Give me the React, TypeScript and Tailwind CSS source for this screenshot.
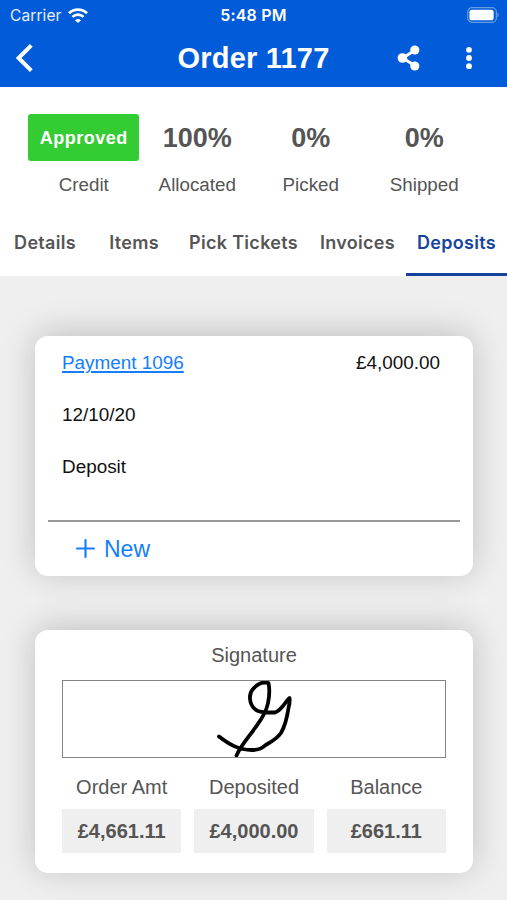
import { FiPlus } from 'react-icons/fi';

interface Stat {
  label: string;
  value: string;
  badge?: boolean;
}

const stats: Stat[] = [
  { label: 'Credit', value: 'Approved', badge: true },
  { label: 'Allocated', value: '100%' },
  { label: 'Picked', value: '0%' },
  { label: 'Shipped', value: '0%' },
];

const tabs = [
  { name: 'Details', width: 'w-[90px]' },
  { name: 'Items', width: 'w-[88px]' },
  { name: 'Pick Tickets', width: 'w-[131px]' },
  { name: 'Invoices', width: 'w-[97px]' },
  { name: 'Deposits', width: 'w-[101px]' },
];

const totals = [
  { label: 'Order Amt', value: '£4,661.11' },
  { label: 'Deposited', value: '£4,000.00' },
  { label: 'Balance', value: '£661.11' },
];

function StatusBar() {
  return (
    <div className="grid h-[30px] grid-cols-3 items-center pl-[10px] pr-2 font-['Inter',sans-serif] text-white">
      <div className="flex items-center gap-[6px] text-[15.5px] leading-5 tracking-[0.1px]">
        <span className="pt-px text-white/90">Carrier</span>
        <svg className="h-[15px] w-5" viewBox="0 0 20 15" fill="none" stroke="white">
          <path d="M1 5.2C6 .4 14 .4 19 5.2" strokeWidth="2.8" />
          <path d="M4.4 8.9c3.2-3 8-3 11.2 0" strokeWidth="2.6" />
          <path d="M7 12.2c1.7-1.6 4.3-1.6 6 0L10 15z" fill="white" stroke="none" />
        </svg>
      </div>
      <span className="pr-[2px] text-center text-base font-semibold leading-5 tracking-[0.2px]">5:48 PM</span>
      <svg className="h-4 w-8 justify-self-end" viewBox="0 0 33 16" preserveAspectRatio="none">
        <rect x="0.7" y="0.7" width="29.6" height="14.6" rx="4.5" fill="none" stroke="white" strokeOpacity="0.4" strokeWidth="1.2" />
        <rect x="2.5" y="2.7" width="25" height="10.6" rx="2.6" fill="white" />
        <path d="M31.4 5.6v4.8c1.6-.8 1.6-4 0-4.8z" fill="white" fillOpacity="0.45" />
      </svg>
    </div>
  );
}

function Header() {
  return (
    <header className="h-[87px] bg-[#025bd8]">
      <StatusBar />
      <div className="grid h-[55px] grid-cols-[1fr_auto_1fr] items-center pl-[15px] pr-[15px] text-white">
        <button className="justify-self-start">
          <svg className="h-7 w-5" viewBox="0 0 20 28" fill="none" stroke="currentColor" strokeWidth="4">
            <path d="M16.3 1.4 3.6 14l12.7 12.6" />
          </svg>
        </button>
        <h1 className="text-[29px] font-bold leading-8 tracking-[0.2px]">Order 1177</h1>
        <div className="flex items-center justify-end gap-[46px] pr-5">
          <svg className="h-[26px] w-[23px]" viewBox="0 0 23 26" fill="currentColor">
            <path d="M18 5.2 5.8 13l12.2 7.8" fill="none" stroke="currentColor" strokeWidth="3" />
            <circle cx="17.8" cy="5" r="4.6" />
            <circle cx="5.4" cy="13" r="4.8" />
            <circle cx="17.8" cy="21" r="4.6" />
          </svg>
          <svg className="h-6 w-[6px]" viewBox="0 0 6 24" fill="currentColor">
            <circle cx="3" cy="3.8" r="2.9" />
            <circle cx="3" cy="12" r="2.9" />
            <circle cx="3" cy="20.2" r="2.9" />
          </svg>
        </div>
      </div>
    </header>
  );
}

function SummaryCard() {
  return (
    <section className="h-[243px] rounded-[13px] bg-white px-[27px] pt-3 text-[#555] shadow-[0_-3px_34px_rgba(0,0,0,0.2)]">
      <h2 className="text-center text-[20px] leading-[27px]">Signature</h2>
      <div className="mt-[11px] h-[78px] border border-[#858585]">
        <svg className="mx-auto h-[76px] w-[90px]" viewBox="0 0 90 76" fill="none" stroke="black" strokeWidth="3.8" strokeLinecap="round" strokeLinejoin="round">
          <path d="M10 55.500C19 62.500 29 69 43 69C49 69 53 67.500 56 64.500C61 61 67 59 72 52C76 45 78 37 79.500 27C80.500 23 81 20 80.500 17C76 21 73 29 66 31.500C59 31.500 51 32 47 29C39 23 40 12 44 8C48 3 54 .5 59.500 2C60.500 7 60.500 15 59 22C57 33 51 40 46 47C39 57 32 64 27.500 74.500" />
        </svg>
      </div>
      <div className="mt-4 grid grid-cols-3 gap-[13px] text-center">
        {totals.map((total) => (
          <div key={total.label}>
            <div className="text-[20px] leading-[27px]">{total.label}</div>
            <div className="mt-2 h-[44px] bg-[#efefef] text-[20px] font-bold leading-[45px]">{total.value}</div>
          </div>
        ))}
      </div>
    </section>
  );
}

export default function App() {
  return (
    <div className="h-[900px] w-[507px] overflow-hidden bg-[#efefef] font-['Liberation_Sans',Arial,sans-serif]">
      <Header />

      <div className="h-[189px] bg-white pt-[27px] text-[#555]">
        <div className="grid grid-cols-4 pl-[27px] pr-[26px] text-center">
          {stats.map((stat) => (
            <div key={stat.label} className="flex flex-col items-center">
              {stat.badge ? (
                <div className="h-[47px] w-[111px] rounded-[3px] bg-[#33cc33] text-[18px] font-bold leading-[48px] tracking-[0.5px] text-white">
                  {stat.value}
                </div>
              ) : (
                <div className="h-[47px] text-[27px] font-bold leading-[49px]">{stat.value}</div>
              )}
              <div className="mt-[11px] text-[18.8px] leading-[26px]">{stat.label}</div>
            </div>
          ))}
        </div>

        <nav className="mt-3 flex h-[66px] font-['Inter',sans-serif] text-[18px] font-semibold tracking-[0.3px]">
          {tabs.map((tab) => (
            <button
              key={tab.name}
              className={`h-full shrink-0 whitespace-nowrap border-b-[3px] pt-0.5 ${tab.width} ${tab.name === 'Deposits' ? 'border-[#1743a0] text-[#1743a0]' : 'border-transparent'}`}
            >
              {tab.name}
            </button>
          ))}
        </nav>
      </div>

      <main className="flex flex-col gap-[54px] pl-[35px] pr-[34px] pt-[60px]">
        <section className="h-[240px] rounded-[13px] bg-white px-[13px] pt-[14px] text-[18.9px] leading-[26px] text-[#111] shadow-[0_-3px_34px_rgba(0,0,0,0.2)]">
          <div className="h-[172px] border-b-2 border-[#999] px-[14px]">
            <div className="flex justify-between pr-[6px]">
              <a className="text-[#147efb] underline decoration-2 underline-offset-2">Payment 1096</a>
              <span>£4,000.00</span>
            </div>
            <div className="mt-[26px]">12/10/20</div>
            <div className="mt-[26px]">Deposit</div>
          </div>
          <button className="ml-[23px] mt-3 flex items-center gap-1 text-[23px] text-[#147efb]">
            <FiPlus className="h-[29px] w-[29px]" strokeWidth={1.8} />
            New
          </button>
        </section>

        <SummaryCard />
      </main>
    </div>
  );
}
